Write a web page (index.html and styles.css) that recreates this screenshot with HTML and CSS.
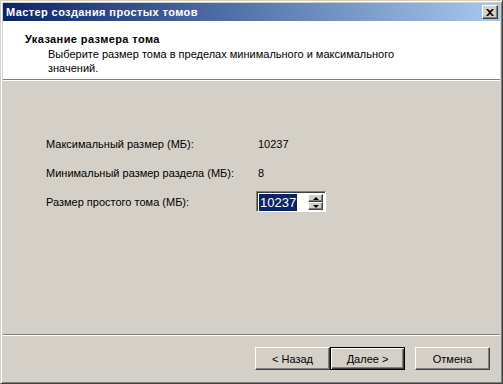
FILE: index.html
```html
<!DOCTYPE html>
<html lang="ru">
<head>
    <meta charset="UTF-8">
    <title>Мастер создания простых томов</title>
    <link rel="stylesheet" href="styles.css">
</head>
<body>
    <div class="window">
        <div class="titlebar">
            <span class="title">Мастер создания простых томов</span>
            <span class="close">
                <svg width="8" height="7" viewBox="0 0 8 7"><path d="M0 0h2l2 2 2-2h2L5 3.5 8 7H6L4 5 2 7H0l3-3.5z" fill="#000"/></svg>
            </span>
        </div>
        <div class="header">
            <div class="head-title">Указание размера тома</div>
            <div class="head-text">Выберите размер тома в пределах минимального и максимального значений.</div>
        </div>
        <div class="sep"></div>
        <div class="content">
            <div class="row">
                <span class="label">Максимальный размер (МБ):</span>
                <span class="value">10237</span>
            </div>
            <div class="row">
                <span class="label">Минимальный размер раздела (МБ):</span>
                <span class="value">8</span>
            </div>
            <div class="row">
                <span class="label">Размер простого тома (МБ):</span>
                <div class="spin">
                    <span class="spin-text"><span class="sel">10237</span></span>
                    <span class="spin-btns">
                        <span class="spin-btn"><i class="arr up"></i></span>
                        <span class="spin-btn"><i class="arr down"></i></span>
                    </span>
                </div>
            </div>
        </div>
        <div class="sep"></div>
        <div class="buttons">
            <button class="btn">&lt; Назад</button>
            <button class="btn default">Далее &gt;</button>
            <button class="btn cancel">Отмена</button>
        </div>
    </div>
</body>
</html>
```

FILE: styles.css
```css
*{
    margin: 0;
    padding: 0;
    box-sizing: border-box;
}
body{
    background-color: #d4d0c8;
    font-family: "Liberation Sans", Arial, sans-serif;
    font-size: 11px;
    color: #000;
}
.window{
    display: flex;
    flex-direction: column;
    width: 503px;
    height: 384px;
    padding: 2px;
    border: 1px solid;
    border-color: #d4d0c8 #404040 #404040 #d4d0c8;
    box-shadow: inset 1px 1px #fff, inset -1px -1px #808080;
    background-color: #d4d0c8;
}
.titlebar{
    display: flex;
    align-items: center;
    justify-content: space-between;
    height: 18px;
    padding: 0 2px 0 3px;
    background: linear-gradient(to right, #0a246a, #a6caf0);
    color: #fff;
    font-weight: bold;
    letter-spacing: 0.4px;
}
.close{
    display: flex;
    align-items: center;
    justify-content: center;
    width: 16px;
    height: 14px;
    background-color: #d4d0c8;
    border: 1px solid;
    border-color: #fff #404040 #404040 #fff;
    box-shadow: inset -1px -1px #808080;
}
.header{
    height: 58px;
    padding: 11px 0 0 22px;
    background-color: #fff;
}
.head-title{
    font-weight: bold;
    letter-spacing: 0.4px;
    line-height: 14px;
}
.head-text{
    width: 400px;
    margin-top: 1px;
    padding-left: 23px;
    line-height: 14px;
}
.sep{
    height: 2px;
    border-top: 1px solid #808080;
    border-bottom: 1px solid #fff;
}
.content{
    flex: 1;
    padding: 48px 0 0 43px;
}
.row{
    display: flex;
    align-items: center;
    height: 29px;
}
.label{
    width: 212px;
}
.spin{
    display: flex;
    width: 70px;
    height: 21px;
    margin-left: -2px;
    padding: 2px 2px 1px 2px;
    border: 1px solid;
    border-color: #808080 #fff #fff #808080;
    box-shadow: inset 1px 1px #404040;
    background-color: #fff;
}
.spin-text{
    flex: 1;
    display: flex;
    align-items: center;
}
.sel{
    padding: 1px 1px;
    background-color: #0a246a;
    color: #fff;
    font-size: 13px;
    line-height: 15px;
}
.spin-btns{
    display: flex;
    flex-direction: column;
    width: 15px;
}
.spin-btn{
    display: flex;
    align-items: center;
    justify-content: center;
    flex: 1;
    background-color: #d4d0c8;
    border: 1px solid;
    border-color: #fff #404040 #404040 #fff;
    box-shadow: inset -1px -1px #808080;
}
.arr{
    width: 0;
    height: 0;
    border-left: 3px solid transparent;
    border-right: 3px solid transparent;
}
.arr.up{
    border-bottom: 3px solid #000;
}
.arr.down{
    border-top: 3px solid #000;
}
.buttons{
    display: flex;
    justify-content: flex-end;
    height: 45px;
    padding: 11px 10px 0 0;
}
.btn{
    width: 75px;
    height: 23px;
    font-family: inherit;
    font-size: 11px;
    background-color: #d4d0c8;
    border: 1px solid;
    border-color: #fff #404040 #404040 #fff;
    box-shadow: inset -1px -1px #808080;
}
.btn.default{
    border-color: #000;
    box-shadow: inset 1px 1px #fff, inset -1px -1px #404040, inset -2px -2px #808080;
}
.btn.cancel{
    margin-left: 10px;
}
```
